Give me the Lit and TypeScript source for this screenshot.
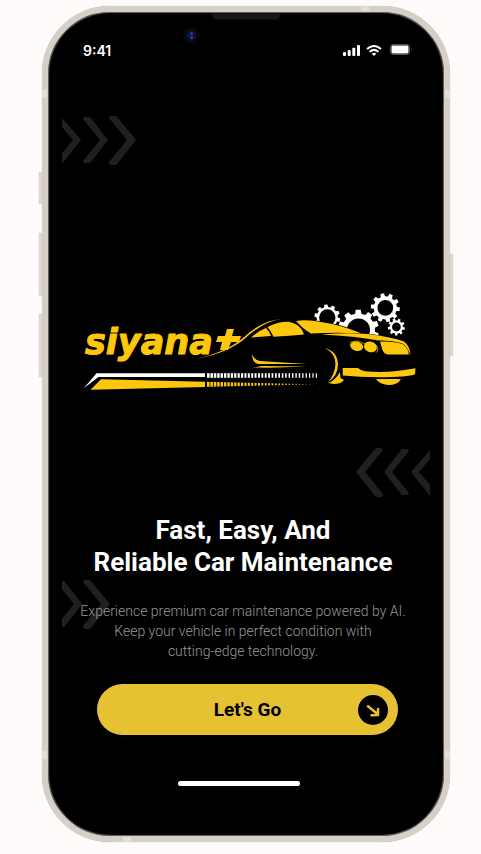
import { LitElement, html, css, svg } from "lit";
import { customElement, property } from "lit/decorators.js";

const CHEVRONS = [
  "M0 2 L19 24 L0 48 V37 L11 24 L0 11 Z",
  "M21 3 Q21 1 23 1 H27 Q28 1 29 2 L46 24 L29 46 Q28 47 27 47 H23 Q21 47 21 45 L38 24 Z",
  "M47 2 Q47 0 49 0 H53 Q54 0 55 1 L74 24 L55 48 Q54 49 53 49 H49 Q47 49 47 46 L65 24 Z",
];

@customElement("chevron-trio")
export class ChevronTrio extends LitElement {
  @property() box = "0 0 74 49";

  static styles = css`
    :host { display: block; height: 49px; }
    svg { display: block; height: 100%; fill: #202020; }
  `;

  render() {
    return html`<svg viewBox=${this.box} aria-hidden="true">
      ${CHEVRONS.map((d) => svg`<path d=${d} />`)}
    </svg>`;
  }
}

/** Outline of a toothed wheel with a round hole. */
function gear(cx: number, cy: number, outer: number, root: number, hole: number, teeth: number, turn = 0) {
  const at = (r: number, a: number) =>
    `${(cx + r * Math.cos(a)).toFixed(2)} ${(cy + r * Math.sin(a)).toFixed(2)}`;
  const step = (Math.PI * 2) / teeth;
  const points: string[] = [];
  for (let i = 0; i < teeth; i++) {
    const a = i * step + turn;
    points.push(at(root, a - step * 0.3), at(outer, a - step * 0.2), at(outer, a + step * 0.2), at(root, a + step * 0.3));
  }
  return `M${points.join("L")}Z M${cx - hole} ${cy} a${hole} ${hole} 0 1 0 ${hole * 2} 0 a${hole} ${hole} 0 1 0 ${-hole * 2} 0Z`;
}

@customElement("siyana-logo")
export class SiyanaLogo extends LitElement {
  static styles = css`
    :host { display: block; }
    svg { display: block; width: 100%; }
    .gold { fill: #fdc70c; }
    .white { fill: #fff; }
    .black { fill: #000; }
    .line { fill: none; stroke: #fdc70c; stroke-linecap: round; }
    .word {
      font: italic bold 35px "DejaVu Sans", sans-serif;
      fill: #fdc70c;
      stroke: #fdc70c;
      stroke-width: 1px;
      stroke-linejoin: round;
    }
  `;

  private dashes() {
    const count = 33;
    return Array.from({ length: count }, (_, i) => {
      const t = i / (count - 1);
      const x = 207 + i * 3.4;
      const w = 2.6 - t * 1.5;
      const h = 5 * (1 - t);
      return svg`
        <rect class="white" x=${x} y="373.2" width=${w} height="4.6" />
        <rect class="gold" x=${x} y=${384.3 - h / 2} width=${w} height=${h} />`;
    });
  }

  render() {
    return html`<svg viewBox="82 290 338 105" role="img" aria-label="siyana+">
      <g class="white" fill-rule="evenodd">
        <path d=${gear(327.3, 317.5, 13, 10.6, 8.2, 10, 0.2)} />
        <path d=${gear(358.5, 330, 20.5, 16.6, 11.5, 10, 0.3)} />
        <path d=${gear(385.3, 307.8, 14.6, 11.6, 7.9, 10, 0.1)} />
        <path d=${gear(396.4, 327, 8.6, 6.6, 4.4, 9, 0.2)} />
      </g>
      <text class="word" x="85" y="354">siyana</text>
      <path class="gold" d="M227 329 H234 L232 336 H241 L239 342 H231 L228 350 H220 L222 342 H216 L218 336 H225 Z" />

      <path class="black" d="M240 346 Q262 320 285 319 Q330 318 361 333 Q390 335 409 346 L412 360 L350 368 L250 372 Z" />
      <path class="gold" d="M196 359 Q226 352 243 338 Q262 320 282 319 Q264 321 245 338.5 Q228 353 196 359 Z" />
      <path class="gold" d="M251 337.6 Q258 331 266 328 Q270 332 271 336 Z" />
      <path class="gold" d="M267.5 327 Q278 321.5 289 321.8 Q301 324 304 334.6 Q290 336 273.5 336.8 Q271 331 267.5 327 Z" />
      <path class="gold" d="M296 321 Q304 319.5 318 321.5 Q342 325 361 333.3 Q334 332 311 333.6 Q303 329 296 321 Z" />
      <path class="gold" d="M321 334.5 Q347 332.5 368 334 Q392 337 404 341.5 Q410 346 410.5 355 Q407 346 402 343.2 Q391 340 379 340.5 Q354 336 321 334.5 Z" />
      <path class="gold" d="M380 341.5 Q394 341 402.5 344 Q408 348 409 354.5 H388 Q384 354 382.5 350 Z" />
      <ellipse class="gold" cx="356.7" cy="346.2" rx="6.6" ry="4.6" transform="rotate(14 356.7 346.2)" />
      <ellipse class="gold" cx="370.4" cy="347" rx="6.6" ry="5.2" transform="rotate(18 370.4 347)" />
      <path class="line" stroke-width=".7" d="M350 342.5 Q358 339 364 344 Q371 339 377 346 Q379 351 376 352.5" />
      <path class="gold" d="M342.7 368 H358 Q361 371 365 371.2 Q388 373.5 415.5 368.2 L415 374.2 Q409 377 378 377.3 Q360 377 342.7 375.6 Z" />
      <path class="gold" d="M376 379 H401 Q398 385 388 385 Q379 384 376 379 Z" />
      <path class="gold" d="M325 348 Q337 351 338 364 Q338 376 328 382 Q335 374 335.5 364 Q335 353 325 348 Z" />
      <path class="gold" d="M328 383 Q335 381 340 372 L340.5 378 L344 380 Q341 384 334 384 Z" />
      <path class="gold" d="M252 354 Q254 360 260 361 L307 364 L258 364 Q252 362 252 354 Z" />
      <path class="gold" d="M253 367.6 L262 366 L307 366.4 L270 367.8 Z" />

      <path class="white" d="M84 388 L96.5 373.3 H205 V377 H98.5 Z" />
      <path class="gold" d="M90.5 389.7 L101 379.3 L205 381.7 V387 Z" />
      ${this.dashes()}
    </svg>`;
  }
}

@customElement("app-root")
export class AppRoot extends LitElement {
  static styles = css`
    :host {
      display: flex;
      box-sizing: border-box;
      min-height: 100vh;
      padding: 6px 31px 12px 42px;
      background: #fffbfb;
      font-family: Roboto, sans-serif;
      color: #fff;
    }
    .phone {
      position: relative;
      flex: 1;
      display: flex;
      box-sizing: border-box;
      border: 6px solid #d6cfc7;
      border-radius: 68px;
      background: #000;
      box-shadow: inset 0 0 1px 1px #6b6660, 0 0 1px #aaa49c;
    }
    .key, .band { position: absolute; }
    .key {
      width: 3px;
      background: #ddd7cf;
      box-shadow: 0 0 1px #a8a29a;
      border-radius: 1px;
      left: -9px;
    }
    .mute { top: 160px; height: 32px; }
    .up { top: 221px; height: 63px; }
    .down { top: 302px; height: 63px; }
    .power { top: 242px; height: 102px; left: auto; right: -9px; }
    .band { background: #e4dfd6; width: 5px; height: 8px; }
    .nw { left: -6px; top: 78px; }
    .ne { right: -6px; top: 78px; }
    .sw { left: -6px; bottom: 77px; }
    .se { right: -6px; bottom: 77px; }
    .top { top: -6px; right: 75px; width: 8px; height: 5px; }
    .bottom { bottom: -6px; left: 75px; width: 8px; height: 5px; }
    .speaker {
      position: absolute;
      top: 1px;
      left: 50%;
      width: 66px;
      height: 5px;
      margin-left: -34px;
      border: 1px solid #0c0c0c;
      border-radius: 0 0 4px 4px;
      background: #181818;
    }
    .camera {
      position: absolute;
      top: 15px;
      left: 135px;
      width: 17px;
      height: 17px;
    }
    .deco { position: absolute; }
    .deco.one { left: 14px; top: 104px; }
    .deco.two { right: 14px; top: 436px; transform: scaleX(-1); }
    .deco.three { left: 14px; top: 568px; }
    .screen {
      position: relative;
      flex: 1;
      display: flex;
      flex-direction: column;
      min-width: 0;
    }
    .status {
      display: flex;
      align-items: center;
      gap: 6px;
      height: 22px;
      padding: 28px 31px 0 35px;
    }
    .time {
      flex: 1;
      font: 600 14px/22px Inter, sans-serif;
    }
    .status svg { display: block; margin-bottom: 2px; }
    .status .battery { margin: 0 0 4px 2px; }
    .logo { flex: 1; padding: 228px 24px 0 34px; }
    h1 {
      margin: 0 6px 0 0;
      font-size: 26px;
      line-height: 32px;
      font-weight: 700;
      text-align: center;
    }
    p {
      margin: 23px 6px 0 0;
      font-size: 14px;
      line-height: 20px;
      font-weight: 300;
      text-align: center;
      color: #979797;
    }
    .go {
      display: grid;
      grid-template-columns: 30px 1fr 30px;
      align-items: center;
      height: 51px;
      margin: 23px 46px 0 49px;
      padding: 0 10px;
      border: 0;
      border-radius: 26px;
      background: #e6c233;
      color: #000;
      font: 700 19px/24px Roboto, sans-serif;
      cursor: pointer;
    }
    .go span { grid-column: 2; }
    .home {
      align-self: center;
      width: 122px;
      height: 5px;
      margin: 46px 15px 50px 0;
      border-radius: 3px;
      background: #fff;
    }
  `;

  render() {
    return html`
      <main class="phone">
        <i class="key mute"></i><i class="key up"></i><i class="key down"></i><i class="key power"></i>
        <i class="band nw"></i><i class="band ne"></i><i class="band sw"></i><i class="band se"></i>
        <i class="band top"></i><i class="band bottom"></i>
        <i class="speaker"></i>
        <svg class="camera" viewBox="0 0 17 17" aria-hidden="true">
          <circle cx="8.5" cy="8.5" r="8.5" fill="#09070b" />
          <circle cx="8.5" cy="8.5" r="5" fill="#0c1238" />
          <circle cx="8.5" cy="6.5" r="1.5" fill="#2a3f95" />
          <circle cx="8.5" cy="10.5" r="1.5" fill="#2a3f95" />
        </svg>
        <chevron-trio class="deco one"></chevron-trio>
        <chevron-trio class="deco two"></chevron-trio>
        <chevron-trio class="deco three" box="26 0 48 49"></chevron-trio>
        <div class="screen">
          <div class="status">
            <span class="time">9:41</span>
            <svg width="17" height="11" viewBox="0 0 17 11" fill="#fff" aria-hidden="true">
              <rect y="7" width="3" height="4" rx="1" />
              <rect x="4.7" y="5" width="3" height="6" rx="1" />
              <rect x="9.3" y="2.7" width="3" height="8.3" rx="1" />
              <rect x="14" width="3" height="11" rx="1" />
            </svg>
            <svg width="16" height="11" viewBox="0 0 16 11" fill="none" stroke="#fff" stroke-width="2" aria-hidden="true">
              <path d="M1 4 Q8 -2 15 4" />
              <path d="M3.6 6.7 Q8 3 12.4 6.7" />
              <path d="M8 11 L5.6 8.6 Q8 6.8 10.4 8.6 Z" fill="#fff" stroke="none" />
            </svg>
            <svg class="battery" width="23" height="11" viewBox="0 0 23 11" aria-hidden="true">
              <rect x=".5" y=".5" width="19" height="10" rx="2.5" fill="none" stroke="#555" />
              <rect x="1.5" y="1.5" width="17" height="8" rx="1.4" fill="#fff" />
              <path d="M21 4 Q22.4 5.5 21 7 Z" fill="#555" />
            </svg>
          </div>
          <div class="logo"><siyana-logo></siyana-logo></div>
          <h1>Fast, Easy, And<br />Reliable Car Maintenance</h1>
          <p>Experience premium car maintenance powered by AI.<br />Keep your vehicle in perfect condition with<br />cutting-edge technology.</p>
          <button class="go" type="button">
            <span>Let's Go</span>
            <svg width="30" height="30" viewBox="0 0 30 30" aria-hidden="true">
              <circle cx="15" cy="15" r="15" />
              <path d="M10 11.3 L19.5 19 M20 14 V20 L13.5 20.2" fill="none" stroke="#e6c233" stroke-width="2.5" stroke-linecap="round" stroke-linejoin="round" />
            </svg>
          </button>
          <div class="home"></div>
        </div>
      </main>
    `;
  }
}
